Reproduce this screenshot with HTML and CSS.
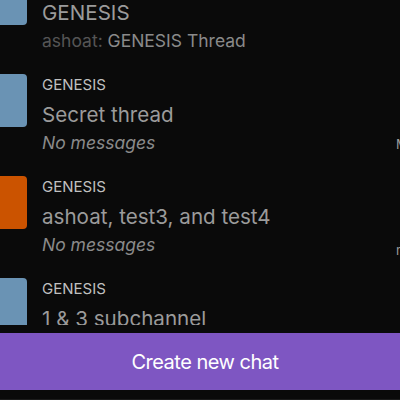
FILE: index.html
```html
<!DOCTYPE html>
<html lang="en">
<head>
    <meta charset="UTF-8">
    <meta name="viewport" content="width=device-width, initial-scale=1.0">
    <title>Chats</title>
    <link rel="stylesheet" href="styles.css">
</head>
<body>

    <div class="chat-list">
        <div class="chat-row">
            <div class="avatar blue"></div>
            <div class="chat-info">
                <div class="community"></div>
                <div class="chat-name">GENESIS</div>
                <div class="last-line">
                    <span class="message"><span class="author">ashoat:</span> GENESIS Thread</span>
                    <span class="time"></span>
                </div>
            </div>
        </div>

        <div class="chat-row">
            <div class="avatar blue"></div>
            <div class="chat-info">
                <div class="community">GENESIS</div>
                <div class="chat-name">Secret thread</div>
                <div class="last-line">
                    <span class="message empty">No messages</span>
                    <span class="time">Mar 20</span>
                </div>
            </div>
        </div>

        <div class="chat-row">
            <div class="avatar orange"></div>
            <div class="chat-info">
                <div class="community">GENESIS</div>
                <div class="chat-name">ashoat, test3, and test4</div>
                <div class="last-line">
                    <span class="message empty">No messages</span>
                    <span class="time late">now</span>
                </div>
            </div>
        </div>

        <div class="chat-row">
            <div class="avatar blue"></div>
            <div class="chat-info">
                <div class="community">GENESIS</div>
                <div class="chat-name">1 &amp; 3 subchannel</div>
                <div class="last-line">
                    <span class="message empty">No messages</span>
                    <span class="time late">now</span>
                </div>
            </div>
        </div>
    </div>

    <button class="create-btn">Create new chat</button>

</body>
</html>
```

FILE: styles.css
```css
html, body { height: 100%; }

body {
    margin: 0;
    background: #0a0a0a;
    font-family: Inter, "Noto Sans", sans-serif;
    overflow: hidden;
    display: flex;
    flex-direction: column;
    border-bottom: 1px solid #1c1c1c;
    box-sizing: border-box;
}

/* Thread list, scrolled so the first row is half hidden */
.chat-list {
    height: 325px;
    flex: none;
    overflow: hidden;
}

.chat-row {
    display: flex;
    gap: 15px;
    height: 102px;
    margin-left: -26px;
}
.chat-row:first-child { margin-top: -28px; }

.avatar {
    width: 53px;
    height: 53px;
    flex: none;
    border-radius: 4px;
}
.avatar.blue { background: #6a93b4; }
.avatar.orange { background: #cb5300; }

.chat-info {
    display: flex;
    flex-direction: column;
}

.community {
    height: 18px;
    font-size: 15px;
    line-height: 18px;
    color: #c0c0c0;
    margin-top: 2px;
}

.chat-name {
    font-size: 20.6px;
    line-height: 28px;
    color: #9b9b9b;
    margin-top: 7px;
    white-space: nowrap;
}

.last-line {
    display: flex;
    align-items: baseline;
    font-size: 17.5px;
    line-height: 26px;
    margin-top: 1px;
}

.message {
    width: 354px;
    flex: none;
    color: #8a8a8a;
    white-space: nowrap;
}
.message.empty { font-style: italic; }
.author { color: #555; }

.time {
    flex: none;
    font-size: 13px;
    color: #9b9b9b;
    white-space: nowrap;
}
.time.late { position: relative; top: 4px; }

.create-btn {
    flex: none;
    margin-top: 8px;
    height: 57px;
    padding: 0 0 0 10px;
    border: none;
    background: #7e56c2;
    color: #fff;
    font-family: inherit;
    font-size: 20px;
    letter-spacing: -0.5px;
    cursor: pointer;
}
```
